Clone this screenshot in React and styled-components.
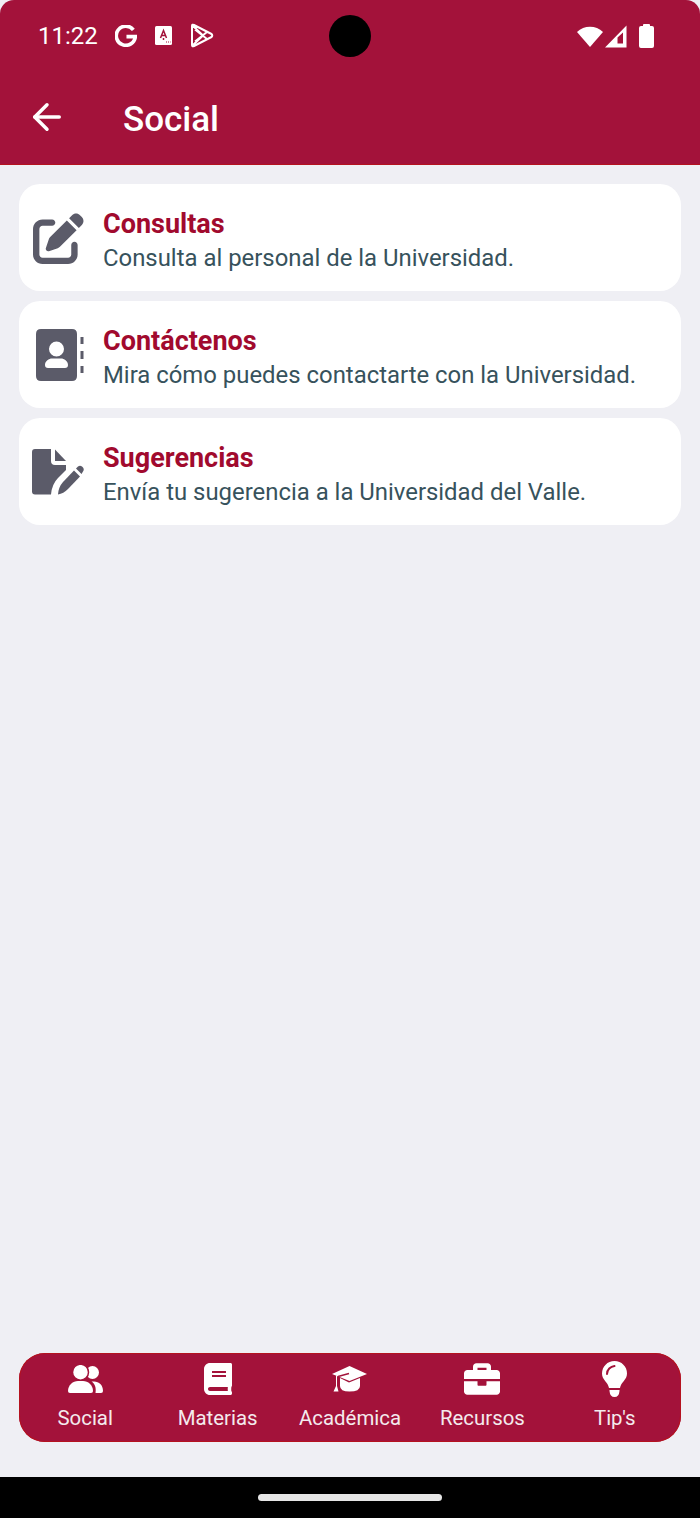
import React from 'react';
import styled, { createGlobalStyle } from 'styled-components';
import { FaPenToSquare } from 'react-icons/fa6';
import { FaBook, FaBriefcase } from 'react-icons/fa';
import { ArrowLeft } from 'lucide-react';

const GlobalStyle = createGlobalStyle`
  html, body {
    margin: 0;
    padding: 0;
    background: #000;
  }
  body {
    font-family: Roboto, "Liberation Sans", sans-serif;
  }
`

function WifiIcon() {
  return (
    <svg width="26" height="22" viewBox="0 0 26 22">
      <path d="M0 7 C7 0 19 0 26 7 L13 22 Z" fill="#fff" />
    </svg>
  );
}

function SignalIcon() {
  return (
    <svg width="22" height="23" viewBox="0 0 22 23">
      <path fillRule="evenodd" d="M21.5 0.5 V22.5 H0 Z M18 7.5 L12.5 12.5 V18.5 H18 Z" fill="#fff" />
    </svg>
  );
}

function BatteryIcon() {
  return (
    <svg width="15" height="24" viewBox="0 0 15 24">
      <path d="M4 2 V1 Q4 0 5 0 H10 Q11 0 11 1 V2 H13 Q15 2 15 4 V22 Q15 24 13 24 H2 Q0 24 0 22 V4 Q0 2 2 2 Z" fill="#fff" />
    </svg>
  );
}

function GoogleIcon() {
  return (
    <svg width="22" height="22" viewBox="0 0 23 23">
      <path d="M19.2 5 A10 10 0 1 0 21.3 12.2 H12" fill="none" stroke="#fff" strokeWidth="3.8" />
    </svg>
  );
}

function TranslateIcon() {
  return (
    <Badge>
      <svg width="17" height="19" viewBox="0 0 17 19">
        <path d="M1.5 0 H15.5 Q17 0 17 1.5 V17.5 Q17 19 15.5 19 H1.5 Q0 19 0 17.5 V1.5 Q0 0 1.5 0 Z" fill="#fff" />
        <path d="M5.5 12 L8.5 4.5 L11.5 12 M6.6 9.6 H10.4 M8.5 12 V14" fill="none" stroke="#a3123a" strokeWidth="1.5" />
        <path d="M11 16 H12 M13 16 H14 M15 16 H15.6" stroke="#a3123a" strokeWidth="1.1" />
      </svg>
    </Badge>
  );
}

function PlayIcon() {
  return (
    <svg width="24" height="25" viewBox="0 0 24 25">
      <path d="M2 3 Q2 1 4 2 L21.5 11 Q23 12.5 21.5 14 L4 23 Q2 24 2 22 Z M2.5 2.5 L13 12.5 L2.5 22.5 M5 18.5 L17 9 M5 6.5 L17 16" fill="none" stroke="#fff" strokeWidth="2" strokeLinejoin="round" />
    </svg>
  );
}

function ContactIcon() {
  return (
    <svg width="48" height="52" viewBox="0 0 48 52">
      <path fillRule="evenodd" d="M5 0 H36 Q41 0 41 5 V47 Q41 52 36 52 H5 Q0 52 0 47 V5 Q0 0 5 0 Z M20.5 12.5 A7.5 7.5 0 1 0 20.5 27.5 A7.5 7.5 0 1 0 20.5 12.5 Z M12 39 H29 Q32 39 32 36 C32 32 28 29.5 25 29.5 H16 C13 29.5 9 32 9 36 Q9 39 12 39 Z" fill="#5b5b69" />
      <path d="M46 8 V15 M46 22 V30 M46 37 V44" stroke="#5b5b69" strokeWidth="3" />
    </svg>
  );
}

function FileEditIcon() {
  return (
    <svg width="52" height="46" viewBox="0 0 52 46">
      <path d="M3 0 H19 V12 Q19 16 23 16 H34 V21 L26 29 Q20 35 19 45.5 H3 Q0 45.500 0 42.500 V3 Q0 0 3 0 Z" fill="#5b5b69" />
      <path d="M23 0.5 L34 12 H23 Z" fill="#5b5b69" />
      <path d="M26 45.5 Q26.5 38 31 33 L42 21.5 L48 27.5 L36 40 Q31.500 44.500 26 45.5 Z" fill="#5b5b69" />
      <path d="M44 19.500 L46 17.500 Q48 16 50 17.500 L51 18.500 Q52.500 20.500 51 22.500 L49.500 25 Z" fill="#5b5b69" />
    </svg>
  );
}

function FriendsIcon() {
  return (
    <svg width="35" height="28" viewBox="0 0 35 28">
      <circle cx="24.500" cy="7.500" r="6.500" fill="#fff" />
      <circle cx="12.500" cy="7.200" r="8" fill="#fff" stroke="#a3123a" strokeWidth="1.500" />
      <path d="M2 28 Q0 28 0 26 C0 20 5 16 10 16 H15 C20 16 25 20 25 26 Q25 28 23 28 Z" fill="#fff" />
      <path d="M27.500 28 H33 Q35 28 35 26 C35 20 31 16.500 26 16.500 H23.500 C26.500 18.500 28.500 22 27.500 28 Z" fill="#fff" />
    </svg>
  );
}

function CapIcon() {
  return (
    <svg width="35" height="26" viewBox="0 0 35 26">
      <path d="M8 12 L17 16.500 L28 12 V20 Q28 25.500 17.500 25.500 Q8 25.500 8 20 Z" fill="#fff" />
      <path d="M17.500 0 L35 8 L17.500 15 L0 8 Z" fill="#fff" />
      <path d="M17 7.500 L6 10.500" stroke="#a3123a" strokeWidth="1.500" fill="none" />
      <path d="M4 9 V20 L1.500 25.500 H6.500 L5 20 V10 Z" fill="#fff" />
    </svg>
  );
}

function BulbIcon() {
  return (
    <svg width="25" height="36" viewBox="0 0 25 36">
      <path d="M12.500 0 C5.500 0 0 5.500 0 12.500 C0 19 6 21 7 27 H18 C19 21 25 19 25 12.500 C25 5.500 19.500 0 12.500 0 Z" fill="#fff" />
      <path d="M5 13 C5 8.500 8.500 5.500 12.500 5" stroke="#a3123a" strokeWidth="2" fill="none" strokeLinecap="round" />
      <path d="M7.500 29 H17.500 V30 Q17 36 12.500 36 Q8 36 7.500 30 Z" fill="#fff" />
    </svg>
  );
}

const cards = [
  { title: 'Consultas', text: 'Consulta al personal de la Universidad.', icon: <FaPenToSquare size={51} color="#5b5b69" /> },
  { title: 'Contáctenos', text: 'Mira cómo puedes contactarte con la Universidad.', icon: <ContactIcon /> },
  { title: 'Sugerencias', text: 'Envía tu sugerencia a la Universidad del Valle.', icon: <FileEditIcon /> },
];

const tabs = [
  { label: 'Social', icon: <FriendsIcon /> },
  { label: 'Materias', icon: <FaBook size={32} /> },
  { label: 'Académica', icon: <CapIcon /> },
  { label: 'Recursos', icon: <FaBriefcase size={36} /> },
  { label: "Tip's", icon: <BulbIcon /> },
];

function App() {
  return (
    <Screen>
      <GlobalStyle />
      <Header>
        <StatusBar>
          <StatusLeft>
            <Clock>11:22</Clock>
            <GoogleIcon />
            <TranslateIcon />
            <PlayIcon />
          </StatusLeft>
          <Camera />
          <StatusRight>
            <WifiIcon />
            <SignalIcon />
            <BatteryIcon />
          </StatusRight>
        </StatusBar>
        <TitleBar>
          <BackArrow>
            <ArrowLeft size={42} strokeWidth={2} color="#fff" />
          </BackArrow>
          <Title>Social</Title>
        </TitleBar>
      </Header>
      <Content>
        <CardList>
          {cards.map((card) => (
            <Card key={card.title}>
              <CardIcon>{card.icon}</CardIcon>
              <CardBody>
                <CardTitle>{card.title}</CardTitle>
                <CardText>{card.text}</CardText>
              </CardBody>
            </Card>
          ))}
        </CardList>
        <TabBar>
          {tabs.map((tab) => (
            <Tab key={tab.label}>
              <TabIcon>{tab.icon}</TabIcon>
              <TabLabel>{tab.label}</TabLabel>
            </Tab>
          ))}
        </TabBar>
      </Content>
      <NavBar>
        <HomePill />
      </NavBar>
    </Screen>
  );
}

export default App;

const Screen = styled.div`
  width: 700px;
  height: 1518px;
  display: flex;
  flex-direction: column;
  background: #efeff4;
  overflow: hidden;
`

const Header = styled.header`
  height: 164px;
  flex: none;
  background: #a3123a;
  border-bottom: 1px solid #b5121f;
  border-radius: 14px 14px 0 0;
`

const StatusBar = styled.div`
  height: 72px;
  padding: 0 46px 0 38px;
  display: grid;
  grid-template-columns: 1fr 42px 1fr;
  align-items: center;
  color: #fff;
`

const StatusLeft = styled.div`
  display: flex;
  align-items: center;
  gap: 17px;
  margin-top: -1px;
`

const StatusRight = styled.div`
  display: flex;
  align-items: center;
  justify-content: flex-end;
  gap: 2px;
  & > svg:last-child {
    margin-left: 10px;
  }
`

const Clock = styled.span`
  font-size: 24px;
`

const Badge = styled.span`
  display: flex;
  margin: 0 1px;
`

const Camera = styled.div`
  width: 42px;
  height: 42px;
  border-radius: 50%;
  background: #000;
  transform: translateX(4px);
`

const TitleBar = styled.div`
  height: 92px;
  padding-left: 26px;
  display: flex;
  align-items: center;
  gap: 55px;
  color: #fff;
`

const BackArrow = styled.div`
  display: flex;
  margin-top: -2px;
`

const Title = styled.h1`
  margin: 2px 0 0;
  font-size: 35px;
  font-weight: 500;
`

const Content = styled.main`
  flex: 1;
  padding: 19px 19px 35px;
  display: flex;
  flex-direction: column;
  justify-content: space-between;
`

const CardList = styled.div`
  display: flex;
  flex-direction: column;
  gap: 10.5px;
`

const Card = styled.div`
  height: 106.5px;
  display: flex;
  align-items: center;
  background: #fff;
  border-radius: 21px;
`

const CardIcon = styled.div`
  width: 65px;
  margin-right: 19px;
  padding-top: 2px;
  flex: none;
  display: flex;
  justify-content: flex-end;
`

const CardBody = styled.div`
  display: flex;
  flex-direction: column;
  padding-top: 8px;
`

const CardTitle = styled.div`
  font-size: 27px;
  font-weight: 700;
  line-height: 34px;
  color: #a10a2e;
`

const CardText = styled.div`
  font-size: 23.9px;
  line-height: 34px;
  color: #37525c;
`

const TabBar = styled.nav`
  height: 89px;
  display: grid;
  grid-template-columns: repeat(5, 1fr);
  background: #a3123a;
  border-radius: 26px;
  box-shadow: inset 0 0 0 1px #b5121f;
`

const Tab = styled.div`
  display: flex;
  flex-direction: column;
  align-items: center;
  color: #fff;
`

const TabIcon = styled.div`
  height: 44px;
  display: flex;
  align-items: center;
  justify-content: center;
  margin-top: 4px;
`

const TabLabel = styled.span`
  font-size: 20.4px;
  line-height: 28px;
  margin-top: 3px;
  color: #f4eaed;
`

const NavBar = styled.div`
  height: 41px;
  flex: none;
  background: #000;
  display: flex;
  align-items: center;
  justify-content: center;
`

const HomePill = styled.div`
  width: 184px;
  height: 7px;
  border-radius: 4px;
  background: #e6e6e6;
`
